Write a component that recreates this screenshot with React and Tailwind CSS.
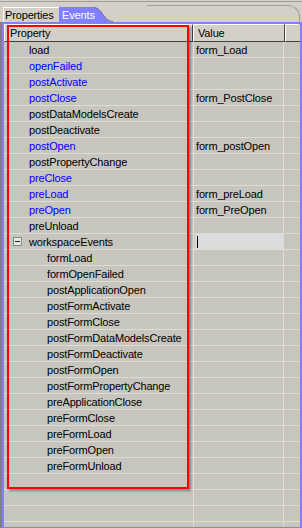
import React from "react";

const rows = [
  { name: "load", value: "form_Load", blue: false, level: 0 },
  { name: "openFailed", blue: true, level: 0 },
  { name: "postActivate", blue: true, level: 0 },
  { name: "postClose", value: "form_PostClose", blue: true, level: 0 },
  { name: "postDataModelsCreate", level: 0 },
  { name: "postDeactivate", level: 0 },
  { name: "postOpen", value: "form_postOpen", blue: true, level: 0 },
  { name: "postPropertyChange", level: 0 },
  { name: "preClose", blue: true, level: 0 },
  { name: "preLoad", value: "form_preLoad", blue: true, level: 0 },
  { name: "preOpen", value: "form_PreOpen", blue: true, level: 0 },
  { name: "preUnload", level: 0 },
  { name: "workspaceEvents", level: 0, group: true, selected: true },
  { name: "formLoad", level: 1 },
  { name: "formOpenFailed", level: 1 },
  { name: "postApplicationOpen", level: 1 },
  { name: "postFormActivate", level: 1 },
  { name: "postFormClose", level: 1 },
  { name: "postFormDataModelsCreate", level: 1 },
  { name: "postFormDeactivate", level: 1 },
  { name: "postFormOpen", level: 1 },
  { name: "postFormPropertyChange", level: 1 },
  { name: "preApplicationClose", level: 1 },
  { name: "preFormClose", level: 1 },
  { name: "preFormLoad", level: 1 },
  { name: "preFormOpen", level: 1 },
  { name: "preFormUnload", level: 1 },
  { name: "" },
  { name: "" },
  { name: "" },
  { name: "" },
];

function Row({ r }) {
  return (
    <div className="flex h-[16px] shrink-0 border-b border-[#dedcd5]">
      <div className="relative flex w-[190px] shrink-0 items-center border-r border-[#dedcd5]">
        {r.group && (
          <div className="absolute left-[9px] top-[3px] flex h-[9px] w-[9px] items-center justify-center border border-[#8a8a8a] bg-[#e6e6e2]">
            <div className="h-px w-[5px] bg-[#222]" />
          </div>
        )}
        <span
          className={
            (r.level === 1 ? "pl-[43px] " : "pl-[25px] ") +
            "pt-px " +
            (r.blue ? "text-[#0000ff]" : "text-black")
          }
        >
          {r.name}
        </span>
      </div>
      <div className="flex w-[90px] shrink-0 items-center border-r border-[#dedcd5]">
        {r.selected ? (
          <div className="ml-px flex h-full w-full items-center bg-[#dcdcdc]">
            <div className="ml-[2px] h-[12px] w-px bg-black" />
          </div>
        ) : (
          <span className="pl-[2px] pt-px">{r.value || ""}</span>
        )}
      </div>
      <div className="flex-1" />
    </div>
  );
}

export default function App() {
  return (
    <div className="relative h-[528px] w-[302px] overflow-hidden bg-[#d4d0c8] font-['Liberation_Sans',Arial,sans-serif] text-[11px] leading-none tracking-[-0.15px] text-black">
      {/* top window line */}
      <div className="mt-px h-[2px] border-t border-[#a09d96]" />
      {/* tab strip */}
      <div className="flex h-[19px] items-end">
        <div className="ml-[3px] flex h-[15px] w-[56px] items-center border-l border-t border-white pl-[1px] pt-px">
          Properties
        </div>
        <div className="relative flex h-[15px] w-[54px] items-center pl-[3px] pt-px text-white">
          <svg
            className="absolute left-0 top-0"
            width="54"
            height="15"
            viewBox="0 0 54 15"
          >
            <path d="M0 15 V0 H34 C44 0 44 15 54 15 Z" fill="#8080ff" />
            <path d="M34 0.5 C44 0.5 44 14.5 54 14.5" fill="none" stroke="#6e6e9e" strokeWidth="1" />
          </svg>
          <span className="relative">Events</span>
        </div>
        <div className="ml-[34px] mr-[2px] h-[17px] flex-1 rounded-tr-[12px] border-r border-t border-[#a09d96]" />
      </div>
      {/* panel */}
      <div className="flex h-[507px]">
        <div className="w-[2px] shrink-0 bg-[#808080]" />
        <div className="flex flex-1 flex-col border-2 border-[#8080ff]">
          {/* header */}
          <div className="flex h-[18px] shrink-0">
            <div className="flex w-[189px] shrink-0 items-center border-b border-l border-r border-t border-b-[#404040] border-l-white border-r-[#404040] border-t-white pl-[5px] pt-px">
              Property
            </div>
            <div className="flex w-[92px] shrink-0 items-center border-b border-l border-r border-t border-b-[#404040] border-l-white border-r-[#404040] border-t-white pl-[4px] pt-px">
              Value
            </div>
            <div className="w-[13px] shrink-0 border-b border-l border-t border-b-[#404040] border-l-white border-t-white" />
            <div className="flex-1 border-b border-[#404040]" />
          </div>
          <div className="flex flex-1 flex-col overflow-hidden bg-[#c7c6be]">
            {rows.map((r, i) => (
              <Row key={i} r={r} />
            ))}
          </div>
        </div>
      </div>
      <div className="h-[2px] bg-[#808080]" />
      {/* red annotation */}
      <div className="absolute left-[7px] top-[25px] h-[464px] w-[182px] border-2 border-[#ff0000] shadow-[2px_2px_2px_rgba(0,0,0,0.35)]" />
    </div>
  );
}
